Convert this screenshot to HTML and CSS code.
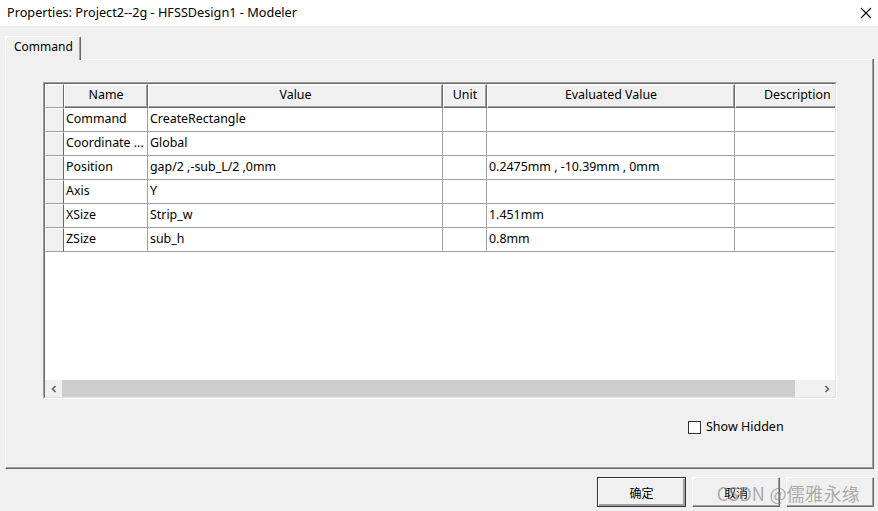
FILE: index.html
```html
<!DOCTYPE html>
<html>
<head>
<meta charset="utf-8">
<link rel="stylesheet" href="styles.css">
</head>
<body>
<div class="window">
  <div class="titlebar">
    <span class="title">Properties: Project2--2g - HFSSDesign1 - Modeler</span>
    <svg class="close" width="12" height="12" viewBox="0 0 12 12"><path d="M1 1 L11 11 M11 1 L1 11" stroke="#000" stroke-width="1.1" fill="none"/></svg>
  </div>
  <div class="main">
    <div class="tabs"><div class="tab">Command</div><div class="tabfill"></div></div>
    <div class="panel">
      <div class="grid">
        <div class="gridin">
          <div class="table">
            <div class="row head">
              <div class="sel"></div>
              <div class="hc c1">Name</div>
              <div class="hc c2">Value</div>
              <div class="hc c3">Unit</div>
              <div class="hc c4">Evaluated Value</div>
              <div class="hc c5">Description</div>
            </div>
            <div class="row">
              <div class="sel"></div><div class="dc c1">Command</div><div class="dc c2">CreateRectangle</div><div class="dc c3"></div><div class="dc c4"></div><div class="dc c5"></div>
            </div>
            <div class="row">
              <div class="sel"></div><div class="dc c1">Coordinate ...</div><div class="dc c2">Global</div><div class="dc c3"></div><div class="dc c4"></div><div class="dc c5"></div>
            </div>
            <div class="row">
              <div class="sel"></div><div class="dc c1">Position</div><div class="dc c2">gap/2 ,-sub_L/2 ,0mm</div><div class="dc c3"></div><div class="dc c4">0.2475mm , -10.39mm , 0mm</div><div class="dc c5"></div>
            </div>
            <div class="row">
              <div class="sel"></div><div class="dc c1">Axis</div><div class="dc c2">Y</div><div class="dc c3"></div><div class="dc c4"></div><div class="dc c5"></div>
            </div>
            <div class="row">
              <div class="sel"></div><div class="dc c1">XSize</div><div class="dc c2">Strip_w</div><div class="dc c3"></div><div class="dc c4">1.451mm</div><div class="dc c5"></div>
            </div>
            <div class="row">
              <div class="sel"></div><div class="dc c1">ZSize</div><div class="dc c2">sub_h</div><div class="dc c3"></div><div class="dc c4">0.8mm</div><div class="dc c5"></div>
            </div>
          </div>
          <div class="hscroll">
            <div class="arrow"><svg width="8" height="8" viewBox="0 0 8 8"><path d="M5.5 1 L2.5 4 L5.5 7" stroke="#606060" stroke-width="1.6" fill="none"/></svg></div>
            <div class="thumb"></div>
            <div class="track"></div>
            <div class="arrow"><svg width="8" height="8" viewBox="0 0 8 8"><path d="M2.5 1 L5.5 4 L2.5 7" stroke="#606060" stroke-width="1.6" fill="none"/></svg></div>
          </div>
        </div>
      </div>
      <div class="options">
        <span class="checkbox"></span><span class="cblabel">Show Hidden</span>
      </div>
    </div>
    <div class="buttons">
      <div class="btn default">确定</div>
      <div class="btn">取消</div>
      <div class="btn"></div>
      <div class="watermark">CSDN @儒雅永缘</div>
    </div>
  </div>
</div>
</body>
</html>
```

FILE: styles.css
```css
* { box-sizing: border-box; }
html, body { margin: 0; padding: 0; }
body {
  width: 878px;
  height: 511px;
  overflow: hidden;
  background: #f0f0f0;
  font-family: "Noto Sans", "Noto Sans CJK SC", sans-serif;
  font-size: 12.4px;
  color: #000;
}
.window { display: flex; flex-direction: column; height: 511px; }
.titlebar {
  height: 26px;
  background: #fff;
  display: flex;
  align-items: center;
  justify-content: space-between;
  padding: 0 6px 3px 7px;
}
.title { font-size: 12.7px; line-height: 14px; }
.close { margin-top: 2px; }
.main { padding: 10px 4px 0 5px; display: flex; flex-direction: column; }
.tabs { display: flex; height: 24px; align-items: flex-end; }
.tab {
  height: 24px;
  width: 76px;
  padding: 1px 0 0 8px;
  border-left: 1px solid #fff;
  border-top: 1px solid #fff;
  border-right: 1px solid #696969;
  box-shadow: inset -1px 0 0 #a0a0a0;
  border-radius: 2px 2px 0 0;
  background: #f0f0f0;
  line-height: 17px;
  font-size: 12px;
  position: relative;
  z-index: 1;
}
.tabfill { flex: 1; border-bottom: 1px solid #fff; height: 1px; }
.panel {
  height: 410px;
  border-left: 1px solid #fff;
  border-bottom: 1px solid #696969;
  border-right: 1px solid #696969;
  box-shadow: inset -1px -1px 0 #a0a0a0;
  padding: 23px 0 0 37px;
  margin-top: -1px;
}
.grid {
  width: 794px;
  height: 317px;
  border-top: 1px solid #a0a0a0;
  border-left: 1px solid #a0a0a0;
  border-right: 1px solid #fff;
  border-bottom: 1px solid #fff;
}
.gridin {
  height: 100%;
  border-top: 1px solid #696969;
  border-left: 1px solid #696969;
  border-right: 1px solid #e3e3e3;
  border-bottom: 1px solid #e3e3e3;
  background: #fff;
  display: flex;
  flex-direction: column;
  overflow: hidden;
}
.table { flex: 1; overflow: hidden; }
.row { display: flex; height: 24px; }
.sel {
  width: 19px;
  flex: none;
  background: #f0f0f0;
  border-top: 1px solid #fff;
  border-left: 1px solid #fff;
  border-right: 1px solid #696969;
  border-bottom: 1px solid #a0a0a0;
}
.c1 { width: 84px; }
.c2 { width: 295px; }
.c3 { width: 44px; }
.c4 { width: 248px; }
.c5 { width: 140px; }
.hc, .dc { flex: none; white-space: nowrap; overflow: hidden; }
.hc {
  background: #f0f0f0;
  border-top: 1px solid #fff;
  border-left: 1px solid #fff;
  border-right: 1px solid #696969;
  border-bottom: 1px solid #696969;
  box-shadow: inset -1px -1px 0 #a0a0a0;
  text-align: center;
  line-height: 20px;
}
.c5.hc { text-align: left; padding-left: 28px; }
.dc {
  border-right: 1px solid #a0a0a0;
  border-bottom: 1px solid #a0a0a0;
  padding-left: 2px;
  line-height: 21px;
}
.hscroll { height: 17px; display: flex; background: #f0f0f0; }
.arrow { width: 17px; display: flex; align-items: center; justify-content: center; }
.thumb { width: 733px; background: #cdcdcd; }
.track { flex: 1; }
.options { display: flex; align-items: center; margin: 21px 0 0 645px; }
.checkbox {
  width: 13px; height: 13px;
  border: 1px solid #333;
  background: #fff;
  margin-right: 5px;
}
.cblabel { font-size: 12.5px; line-height: 14px; }
.buttons {
  display: flex;
  justify-content: flex-end;
  gap: 6px;
  padding-top: 8px;
  padding-right: 0;
  position: relative;
}
.btn {
  width: 88px;
  height: 30px;
  border: 1px solid #adadad;
  border-color: #fff #696969 #696969 #fff;
  box-shadow: inset -1px -1px 0 #a0a0a0;
  background: #f0f0f0;
  display: flex; align-items: center; justify-content: center;
  font-family: "Noto Sans CJK SC", sans-serif;
  font-size: 12px;
}
.btn.default { border: 1px solid #333; box-shadow: inset 1px 1px 0 #fff, inset -2px -2px 0 #a0a0a0; width: 89px; }
.watermark {
  position: absolute;
  right: 14px;
  top: 12px;
  font-family: "Noto Sans CJK SC", sans-serif;
  font-size: 18px;
  line-height: 24px;
  color: rgba(140,140,140,0.7);
  letter-spacing: 0.3px;
  white-space: nowrap;
}
```
